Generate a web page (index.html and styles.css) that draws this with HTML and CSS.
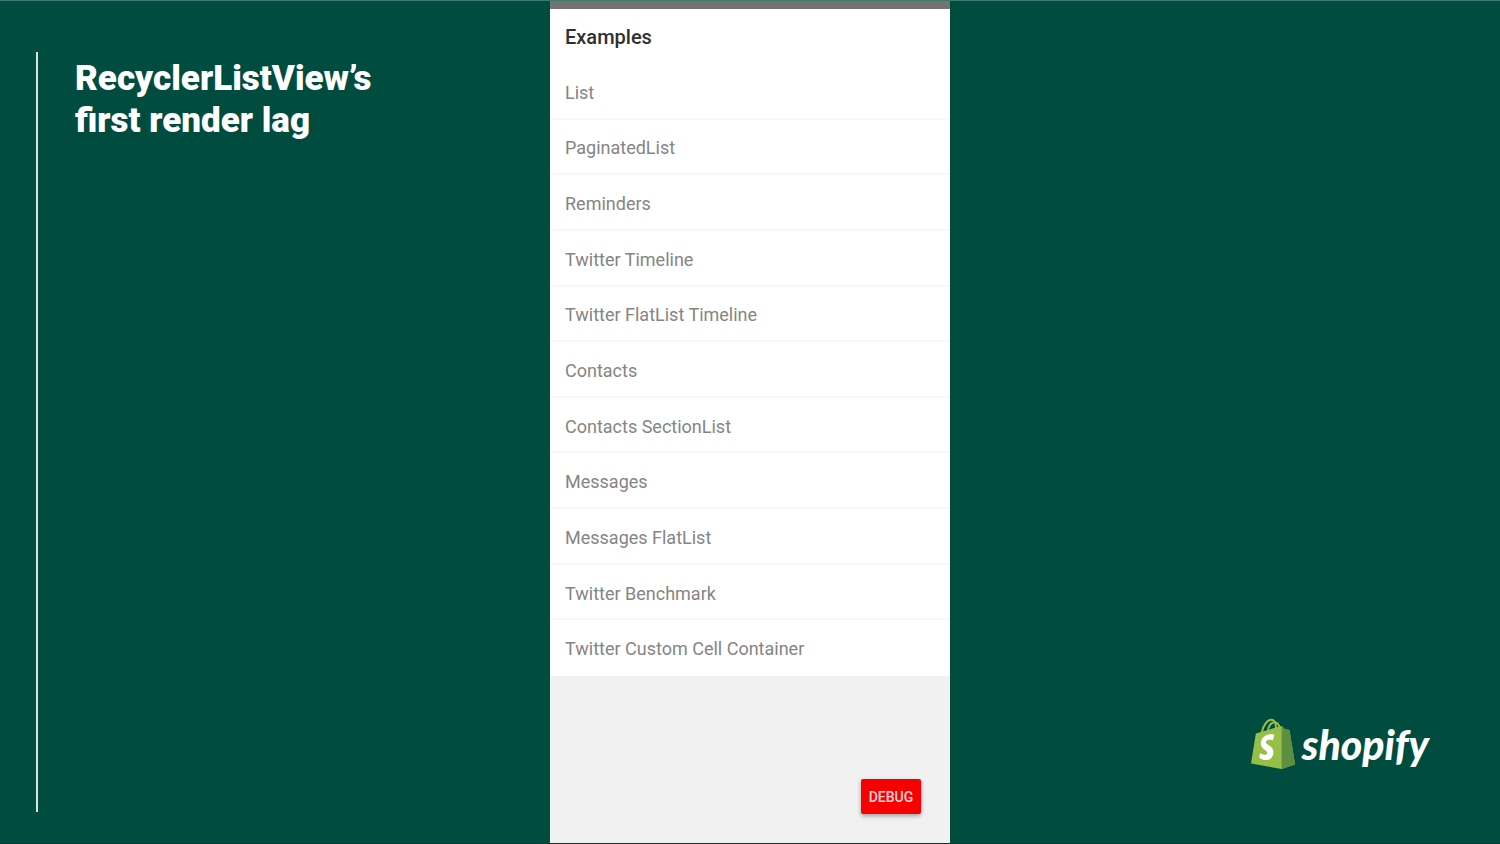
FILE: index.html
```html
<!DOCTYPE html>
<html lang="en">
<head>
<meta charset="utf-8">
<meta name="viewport" content="width=device-width, initial-scale=1">
<title>RecyclerListView’s first render lag</title>
<link rel="stylesheet" href="styles.css">
</head>
<body>
<main class="slide">
  <section class="intro">
    <h1 class="title">RecyclerListView’s<br>first render lag</h1>
  </section>
  <section class="phone">
    <h2 class="phone-title">Examples</h2>
    <ul class="list">
      <li class="row">List</li>
      <li class="row">PaginatedList</li>
      <li class="row">Reminders</li>
      <li class="row">Twitter Timeline</li>
      <li class="row">Twitter FlatList Timeline</li>
      <li class="row">Contacts</li>
      <li class="row">Contacts SectionList</li>
      <li class="row">Messages</li>
      <li class="row">Messages FlatList</li>
      <li class="row">Twitter Benchmark</li>
      <li class="row">Twitter Custom Cell Container</li>
    </ul>
    <div class="phone-footer"><button class="debug" type="button">DEBUG</button></div>
  </section>
  <aside class="brand">
    <svg class="bag" viewBox="0 0 109 126" aria-hidden="true">
      <path fill="#95bf47" d="M12 37 73 19c2-1 4 0 5 1l7 7 9 .5c1 0 1.500 .5 1.600 1.200L109 114l-33 11L0 111z"/>
      <path fill="#5e8e3e" d="M76 19l9 8 9 .5c1 0 1.500 .5 1.600 1.200L109 114l-33 11z"/>
      <g fill="none" stroke="#95bf47" stroke-width="5">
        <path d="M27 34C30 17 41 3 50 3c8 0 12 9 12 22"/>
        <path d="M42 30C44 17 51 9 58 9c7 0 11 6 13 14"/>
      </g>
      <path fill="#fff" d="M58 39.900l-3.800 14.400s-4.300-2-9.400-1.600c-7.500.5-7.500 5.200-7.500 6.400.4 6.400 17.300 7.800 18.300 22.900.7 11.900-6.300 20-16.400 20.600-12.200.8-18.900-6.400-18.900-6.400l2.600-11s6.700 5.100 12.100 4.700c3.500-.2 4.800-3.100 4.700-5.100-.5-8.400-14.300-7.900-15.200-21.700-.7-11.600 6.900-23.400 23.700-24.400 6.500-.5 9.800 1.200 9.800 1.200z"/>
    </svg>
    <span class="wordmark">shopify</span>
  </aside>
</main>
</body>
</html>
```
FILE: styles.css
```css
* { box-sizing: border-box; }

body {
  margin: 0;
  background: #004c3f;
  font-family: Roboto, sans-serif;
}

.slide {
  display: grid;
  grid-template-columns: 11fr 8fr 11fr;
  min-height: 100vh;
  border-top: 1px solid #3d7b6f;
  border-bottom: 1px solid #003c32;
}

.intro {
  margin: 51px 36px 31px;
  padding: 6px 0 0 37px;
  border-left: 2px solid #d5e4e1;
}

.title {
  margin: 0;
  color: #fff;
  font-size: 35px;
  font-weight: 900;
  line-height: 42px;
}

.phone {
  display: grid;
  grid-template-rows: 55px 11fr 3fr;
  border-top: 8px solid #737373;
  background: #f1f1f1;
}

.phone-title {
  margin: 0;
  padding: 0 15px;
  background: #fff;
  color: #303030;
  font-size: 20px;
  font-weight: 500;
  line-height: 56px;
}

.list {
  display: flex;
  flex-direction: column;
  margin: 0;
  padding: 0;
  list-style: none;
  background: #fff;
}

.row {
  display: flex;
  flex: 1;
  align-items: center;
  padding: 3px 15px 0;
  border-bottom: 2px solid #f8f8f8;
  color: #858585;
  font-size: 18px;
}

.row:last-child { border-bottom-color: #fff; }

.phone-footer {
  display: flex;
  align-items: flex-end;
  justify-content: flex-end;
  padding: 29px;
}

.debug {
  width: 60px;
  height: 35px;
  padding: 2px 0 0;
  border: 0;
  border-radius: 2px;
  background: #f80000;
  box-shadow: 0 2px 4px rgb(0 0 0 / 35%);
  color: #ffd9d9;
  font: 500 14px Roboto, sans-serif;
}

.brand {
  display: flex;
  align-items: flex-end;
  justify-content: flex-end;
  gap: 7px;
  padding: 0 71px 73px 0;
}

.bag {
  width: 44px;
  height: 52px;
}

.wordmark {
  color: #fff;
  font-family: Lato, sans-serif;
  font-size: 41px;
  font-style: italic;
  font-weight: 900;
  line-height: 50px;
}
```
